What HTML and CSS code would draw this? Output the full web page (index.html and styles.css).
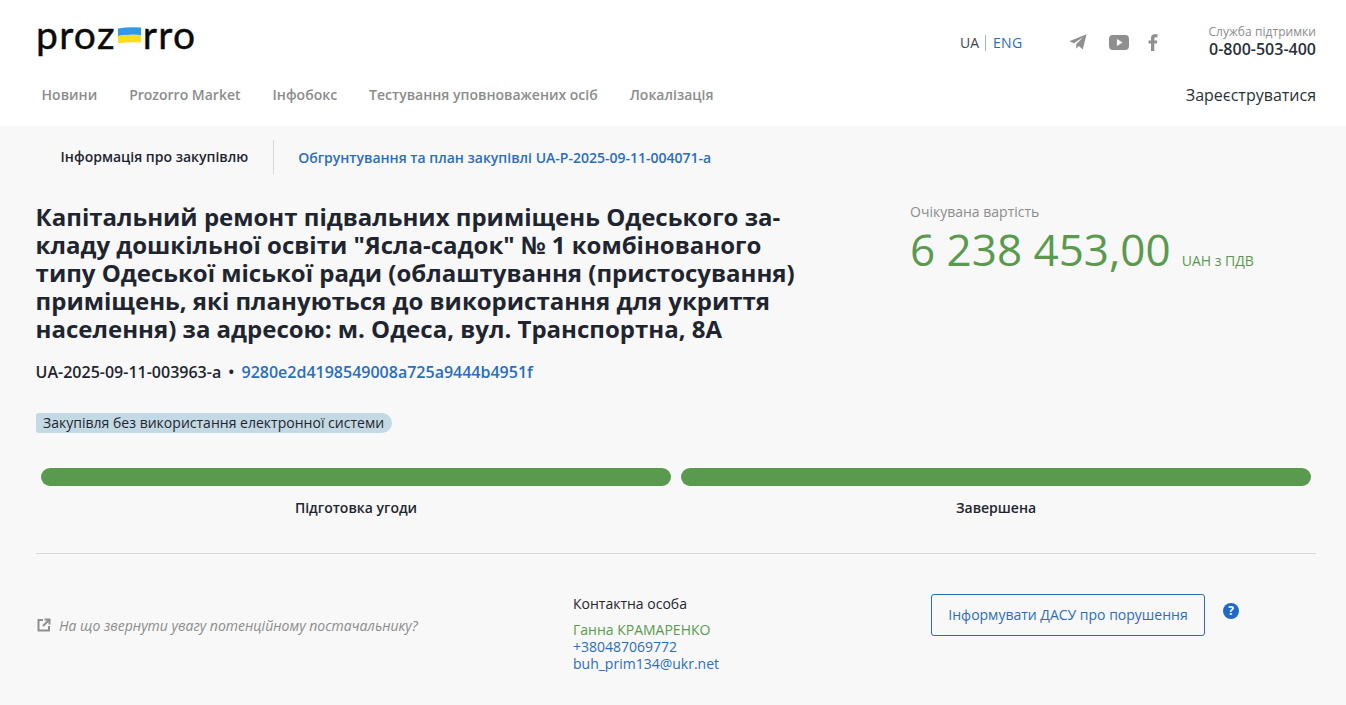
FILE: index.html
```html
<!DOCTYPE html>
<html lang="uk">
<head>
  <meta charset="UTF-8">
  <meta name="viewport" content="width=device-width, initial-scale=1.0">
  <title>Prozorro</title>
  <link rel="stylesheet" href="styles.css">
</head>
<body>
  <header class="header">
    <div class="header-top">
      <a class="logo" href="#">proz<svg class="logo-flag" width="23" height="17" viewBox="0 0 24 17" preserveAspectRatio="none"><path d="M0 1.500 Q12 -0.500 24 0.500 V8 Q12 7 0 9 Z" fill="#2f9be8"/><path d="M0 9 Q12 7 24 8 V15.500 Q12 14.500 0 16.500 Z" fill="#fcdc20"/></svg>rro</a>
      <div class="header-right">
        <div class="lang">
          <span class="lang-current">UA</span>
          <a class="lang-link" href="#">ENG</a>
        </div>
        <div class="social">
          <svg class="icon-telegram" width="18" height="16" viewBox="0 0 20 17" preserveAspectRatio="none"><path d="M19.500 0.300 L0.300 7.800 L5.500 9.800 L15.500 3.500 L8 10.800 L8 15.800 L11 12.700 L15.300 16.500 Z" fill="#8f8f8f"/></svg>
          <svg class="icon-youtube" width="20" height="15" viewBox="0 0 21 15" preserveAspectRatio="none"><path d="M4 0 H17 Q21 0 21 4 V11 Q21 15 17 15 H4 Q0 15 0 11 V4 Q0 0 4 0 Z M8.300 4 V11 L14.300 7.500 Z" fill="#8f8f8f" fill-rule="evenodd"/></svg>
          <svg class="icon-facebook" width="10" height="17" viewBox="0 0 10 17"><path d="M3 17 V9.500 H0.500 V6.500 H3 V4 Q3 0.200 6.800 0.200 H9.500 V3.200 H7.800 Q6.300 3.200 6.300 4.600 V6.500 H9.400 L9 9.500 H6.300 V17 Z" fill="#8f8f8f"/></svg>
        </div>
        <div class="support">
          <div class="support-label">Служба підтримки</div>
          <div class="support-phone">0-800-503-400</div>
        </div>
      </div>
    </div>
    <nav class="nav">
      <div class="nav-links">
        <a href="#">Новини</a>
        <a href="#">Prozorro Market</a>
        <a href="#">Інфобокс</a>
        <a href="#">Тестування уповноважених осіб</a>
        <a href="#">Локалізація</a>
      </div>
      <a class="register" href="#">Зареєструватися</a>
    </nav>
  </header>

  <main class="main">
    <div class="tabs">
      <div class="tab-current">Інформація про закупівлю</div>
      <a class="tab-link" href="#">Обгрунтування та план закупівлі UA-P-2025-09-11-004071-a</a>
    </div>

    <div class="summary">
      <div class="summary-left">
        <h1 class="title">Капітальний ремонт підвальних приміщень Одеського за&shy;кладу дошкільної освіти "Ясла-садок" № 1 комбінованого типу Одеської міської ради (облаштування (пристосування) приміщень, які плануються до використання для укриття населення) за адресою: м. Одеса, вул. Транспортна, 8А</h1>
        <div class="ids">
          <span>UA-2025-09-11-003963-a</span>
          <span class="ids-dot">•</span>
          <a href="#">9280e2d4198549008a725a9444b4951f</a>
        </div>
        <span class="badge">Закупівля без використання електронної системи</span>
      </div>
      <div class="summary-right">
        <div class="price-label">Очікувана вартість</div>
        <div class="price"><span class="price-value">6 238 453,00</span><span class="price-currency">UAH з ПДВ</span></div>
      </div>
    </div>

    <div class="stages">
      <div class="stage">
        <div class="stage-bar"></div>
        <div class="stage-name">Підготовка угоди</div>
      </div>
      <div class="stage">
        <div class="stage-bar"></div>
        <div class="stage-name">Завершена</div>
      </div>
    </div>

    <div class="bottom">
      <a class="hint" href="#">
        <svg class="hint-icon" width="14" height="14" viewBox="0 0 14 14"><path d="M6 2 H1.500 V12.500 H12 V8 M7.500 1.500 H12.500 V6.500 M12.500 1.500 L6 8" fill="none" stroke="#8f8f8f" stroke-width="2"/></svg>
        <span>На що звернути увагу потенційному постачальнику?</span>
      </a>
      <div class="contact">
        <div class="contact-title">Контактна особа</div>
        <div class="contact-name">Ганна КРАМАРЕНКО</div>
        <a href="#">+380487069772</a>
        <a href="#">buh_prim134@ukr.net</a>
      </div>
      <div class="report">
        <a class="report-button" href="#">Інформувати ДАСУ про порушення</a>
        <span class="help">?</span>
      </div>
    </div>
  </main>
</body>
</html>
```

FILE: styles.css
```css
body {
  font-family: "Open Sans", sans-serif;
  margin: 0;
  padding: 0;
  background-color: #f8f8f8;
  color: #1f2530;
  font-size: 14px;
}
a {
  color: #2a6ebb;
  text-decoration: none;
}
.header {
  background-color: white;
  height: 126px;
  padding: 0 30px 0 36px;
  box-sizing: border-box;
}
.header-top {
  display: flex;
  justify-content: space-between;
  height: 72px;
}
.logo {
  display: flex;
  align-items: center;
  height: 30px;
  margin-top: 19px;
  font-family: "Lato", sans-serif;
  font-size: 39px;
  line-height: 30px;
  letter-spacing: 1.3px;
  color: #0b0b0b;
  -webkit-text-stroke: 0.4px #0b0b0b;
}
.logo-flag {
  margin: 2px 2px 0 2px;
}
.header-right {
  display: flex;
  align-items: flex-start;
}
.lang {
  display: flex;
  align-items: center;
  margin-top: 35px;
  line-height: 16px;
}
.lang-current {
  padding-right: 6px;
  border-right: 1px solid #aab2bd;
  color: #3c4450;
}
.lang-link {
  padding-left: 7px;
  letter-spacing: 0.3px;
}
.social {
  display: flex;
  align-items: center;
  margin: 33px 0 0 47px;
  height: 18px;
}
.icon-youtube {
  margin-left: 22px;
}
.icon-facebook {
  margin-left: 19px;
}
.support {
  margin-left: 50px;
  text-align: right;
}
.support-label {
  margin-top: 25px;
  font-size: 12px;
  line-height: 14px;
  letter-spacing: 0.05px;
  color: #8c8c8c;
}
.support-phone {
  font-size: 16px;
  font-weight: 600;
  line-height: 20px;
  color: #2b3038;
}
.nav {
  display: flex;
  justify-content: space-between;
  align-items: center;
  height: 45px;
}
.nav-links {
  display: flex;
  gap: 32px;
  padding-left: 5.6px;
}
.nav-links a {
  font-weight: 600;
  color: #8c8c8c;
}
.register {
  font-size: 16px;
  color: #2b3038;
}
.main {
  padding: 0 30px 0 36px;
}
.tabs {
  display: flex;
  align-items: center;
  height: 62px;
}
.tab-current {
  padding: 0 25px 0 24.6px;
  line-height: 34px;
  font-size: 14px;
  font-weight: 600;
  border-right: 1px solid #d8d8d8;
}
.tab-link {
  margin-left: 24px;
  font-weight: 600;
}
.summary {
  display: flex;
  padding-top: 15px;
}
.summary-left {
  width: 874px;
}
.title {
  width: 770px;
  margin: 0 0 0 -0.4px;
  font-size: 24px;
  font-weight: 700;
  line-height: 28px;
  color: #1f2530;
}
.ids {
  margin: 17px 0 0 -0.4px;
  font-size: 16px;
  font-weight: 400;
  line-height: 24px;
}
.ids span {
  font-weight: 600;
}
.ids-dot {
  margin: 0 3px;
}
.ids a {
  font-weight: 600;
}
.badge {
  display: inline-block;
  margin-top: 29px;
  padding: 0 8px 0 7px;
  line-height: 20px;
  letter-spacing: 0.015px;
  background-color: #c3d9e4;
  border-radius: 3px 10px 10px 3px;
}
.price-label {
  margin-top: -1px;
  color: #8c8c8c;
  line-height: 20px;
}
.price {
  display: flex;
  align-items: baseline;
  margin-top: 1px;
  color: #5a9a4e;
}
.price-value {
  font-size: 44px;
  line-height: 52px;
}
.price-currency {
  margin-left: 11px;
}
.stages {
  display: flex;
  gap: 10px;
  margin: 35px 0 0 5px;
  padding-right: 5px;
}
.stage {
  flex: 1;
  text-align: center;
}
.stage-bar {
  height: 18px;
  background-color: #5a9a4e;
  border-radius: 9px;
}
.stage-name {
  margin-top: 12px;
  font-weight: 600;
  line-height: 20px;
}
.bottom {
  display: flex;
  margin-top: 35px;
  padding-top: 40px;
  border-top: 1px solid #d8d8d8;
}
.hint {
  display: flex;
  align-items: center;
  gap: 8px;
  width: 537px;
  height: 62px;
  font-style: italic;
  color: #8c8c8c;
}
.hint-icon {
  margin-left: 1px;
}
.contact {
  display: flex;
  flex-direction: column;
  width: 358px;
  line-height: 17px;
}
.contact-title {
  line-height: 20px;
  margin-bottom: 7px;
}
.contact-name {
  color: #5a9a4e;
}
.report {
  display: flex;
  align-items: flex-start;
}
.report-button {
  display: block;
  width: 272px;
  height: 40px;
  line-height: 40px;
  text-align: center;
  border: 1px solid #2a6ebb;
  border-radius: 3px;
}
.help {
  width: 16px;
  height: 16px;
  margin: 9px 0 0 18px;
  border-radius: 50%;
  background-color: #1e6ac8;
  color: white;
  font-size: 12px;
  font-weight: 700;
  line-height: 16px;
  text-align: center;
}
```
